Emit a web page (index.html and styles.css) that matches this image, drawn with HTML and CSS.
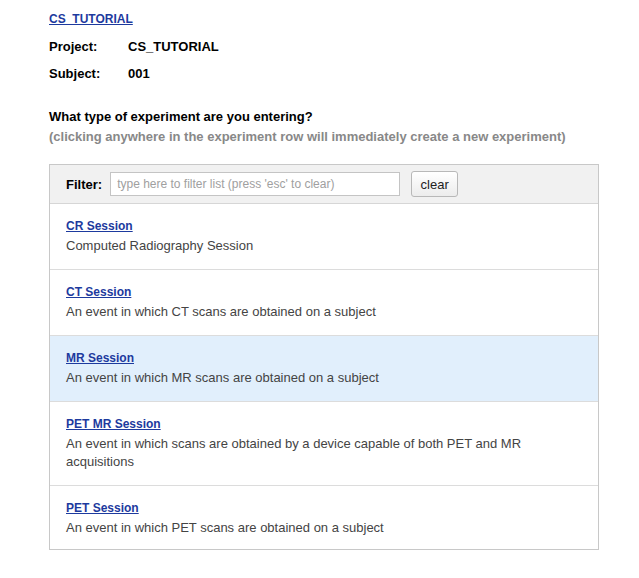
FILE: index.html
```html
<!DOCTYPE html>
<html>
<head>
<meta charset="utf-8">
<link rel="stylesheet" href="styles.css">
</head>
<body>
<div class="page">
  <a class="crumb" href="#">CS_TUTORIAL</a>
  <div class="info">
    <div class="info-row"><span class="info-label">Project:</span><span class="info-value">CS_TUTORIAL</span></div>
    <div class="info-row"><span class="info-label">Subject:</span><span class="info-value">001</span></div>
  </div>
  <div class="question">What type of experiment are you entering?</div>
  <div class="hint">(clicking anywhere in the experiment row will immediately create a new experiment)</div>
  <div class="panel">
    <div class="filter-bar">
      <span class="filter-label">Filter:</span>
      <input class="filter-input" type="text" placeholder="type here to filter list (press 'esc' to clear)">
      <button class="clear-btn">clear</button>
    </div>
    <div class="row">
      <a class="row-title" href="#">CR Session</a>
      <div class="row-desc">Computed Radiography Session</div>
    </div>
    <div class="row">
      <a class="row-title" href="#">CT Session</a>
      <div class="row-desc">An event in which CT scans are obtained on a subject</div>
    </div>
    <div class="row active">
      <a class="row-title" href="#">MR Session</a>
      <div class="row-desc">An event in which MR scans are obtained on a subject</div>
    </div>
    <div class="row">
      <a class="row-title" href="#">PET MR Session</a>
      <div class="row-desc">An event in which scans are obtained by a device capable of both PET and MR acquisitions</div>
    </div>
    <div class="row">
      <a class="row-title" href="#">PET Session</a>
      <div class="row-desc">An event in which PET scans are obtained on a subject</div>
    </div>
  </div>
</div>
</body>
</html>
```
FILE: styles.css
```css
* { box-sizing: border-box; }
body {
  margin: 0;
  background: #fff;
  font-family: "Liberation Sans", Arial, sans-serif;
  font-size: 13px;
  color: #000;
}
.page {
  padding: 10px 40px 0 49px;
}
.crumb {
  display: block;
  font-size: 12px;
  font-weight: bold;
  line-height: 18px;
  color: #1d3a9e;
  text-decoration: underline;
}
.info {
  margin-top: 5px;
}
.info-row {
  display: flex;
  height: 27px;
  align-items: center;
  font-weight: bold;
}
.info-label {
  width: 79px;
}
.question {
  margin-top: 20px;
  font-weight: bold;
  line-height: 20px;
}
.hint {
  font-weight: bold;
  line-height: 20px;
  color: #888;
}
.panel {
  margin-top: 17px;
  width: 550px;
  border: 1px solid #c8c8c8;
}
.filter-bar {
  display: flex;
  align-items: center;
  height: 39px;
  padding: 0 16px;
  background: #f1f1f1;
  border-bottom: 1px solid #d6d6d6;
}
.filter-label {
  font-weight: bold;
  margin-right: 8px;
}
.filter-input {
  width: 290px;
  height: 24px;
  border: 1px solid #c4c4c4;
  background: #fff;
  padding: 0 6px;
  font-family: "Liberation Sans", Arial, sans-serif;
  font-size: 12px;
  outline: none;
}
.filter-input::placeholder {
  color: #a0a0a0;
}
.clear-btn {
  margin-left: 11px;
  width: 47px;
  height: 26px;
  border: 1px solid #b8b8b8;
  border-radius: 3px;
  background: linear-gradient(#ffffff, #ececec);
  font-family: "Liberation Sans", Arial, sans-serif;
  font-size: 13px;
  color: #222;
  padding: 0;
}
.row {
  padding: 11px 16px 14px 16px;
  border-bottom: 1px solid #dcdcdc;
  background: #fff;
}
.row:last-child {
  border-bottom: none;
  padding-bottom: 12px;
}
.row.active {
  background: #e1effc;
}
.row-title {
  display: block;
  font-size: 12px;
  font-weight: bold;
  line-height: 22px;
  color: #1d3a9e;
  text-decoration: underline;
}
.row-desc {
  line-height: 18px;
  color: #444;
}
```
